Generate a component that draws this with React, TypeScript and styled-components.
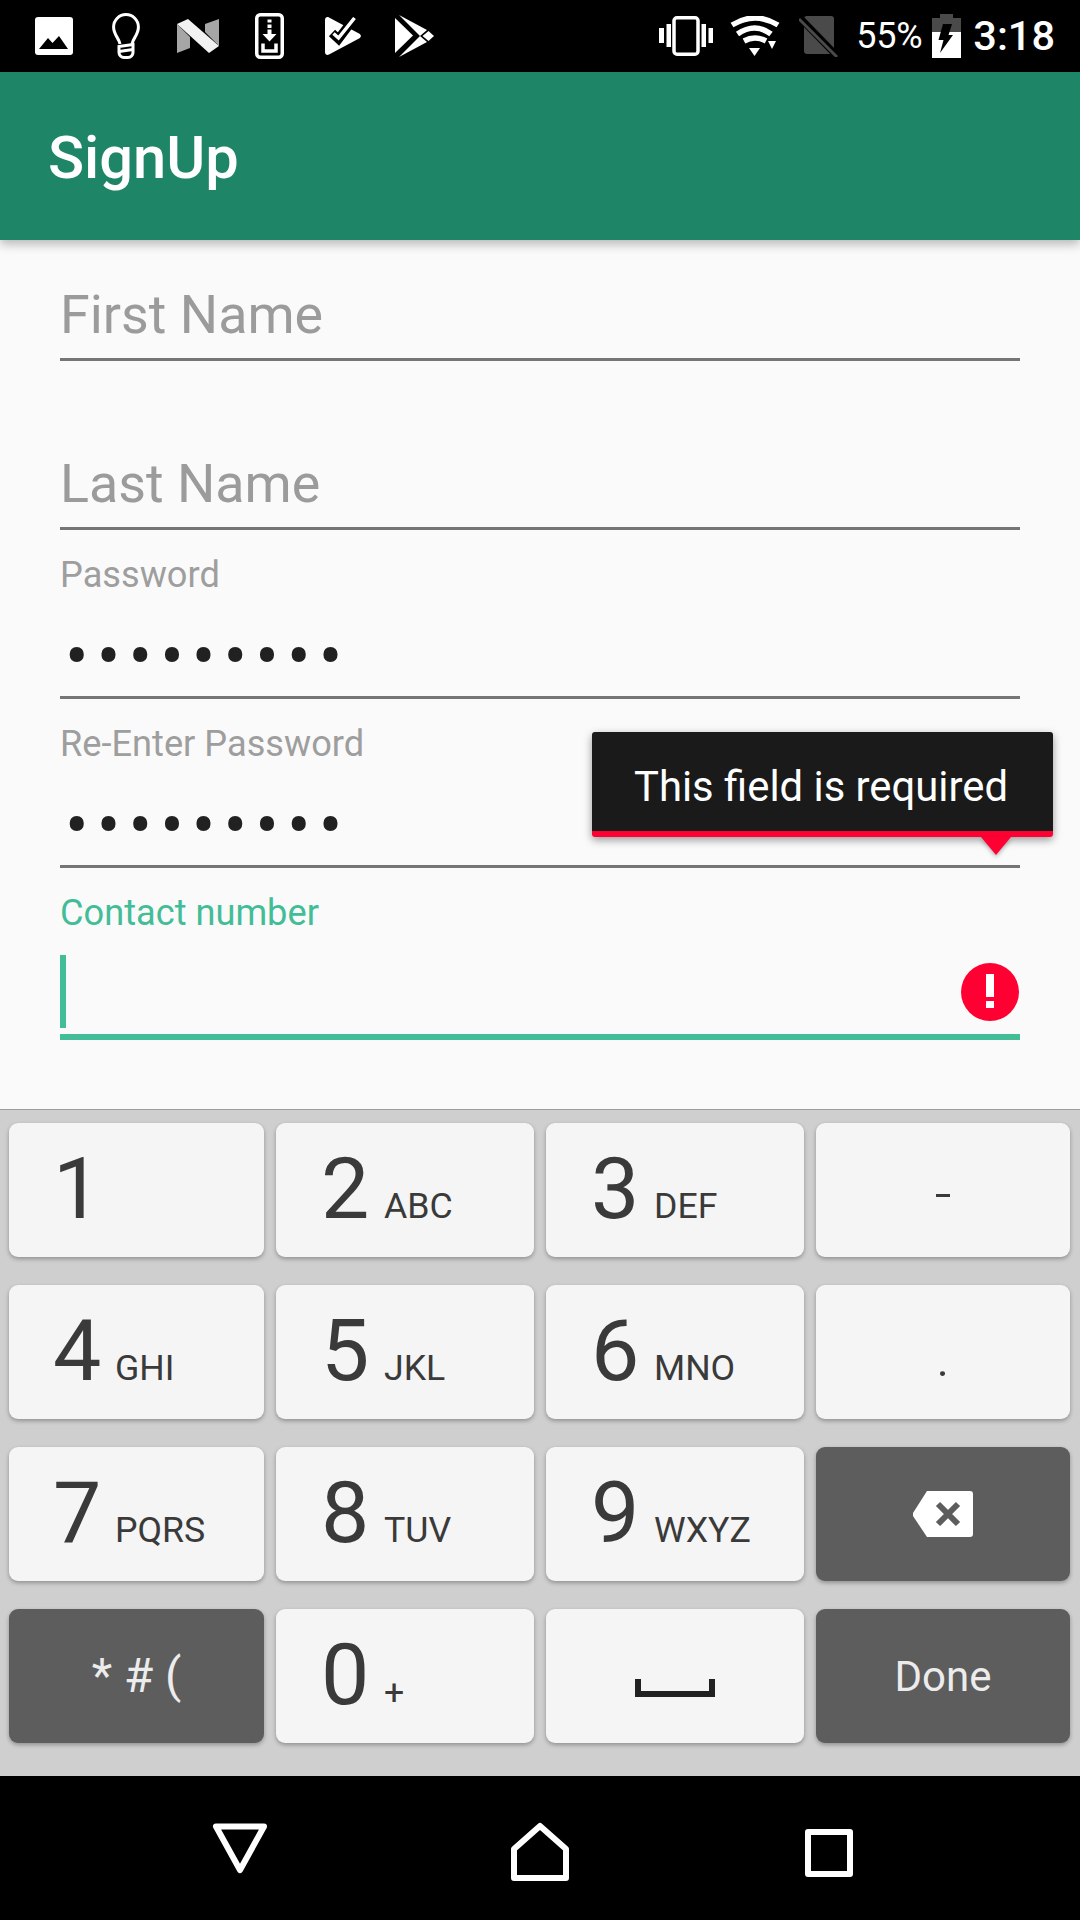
import { FunctionComponent } from "react";
import styled, { createGlobalStyle } from "styled-components";

const GlobalStyle = createGlobalStyle`
  html, body {
    margin: 0;
    padding: 0;
    background: #000;
  }
`;

const Screen = styled.div`
  width: 1080px;
  height: 1920px;
  display: flex;
  flex-direction: column;
  overflow: hidden;
  background: #fafafa;
  font-family: Roboto, "Noto Sans", sans-serif;
`;

const StatusBar = styled.div`
  height: 72px;
  flex-shrink: 0;
  display: flex;
  align-items: center;
  justify-content: space-between;
  padding: 0 25px 0 35px;
  background: #000;
  color: #fff;
`;
const StatusGroup = styled.div`
  display: flex;
  align-items: center;
`;
const StatusIcon = styled.svg<{ $gap?: number }>`
  display: block;
  flex-shrink: 0;
  margin-left: ${(p) => p.$gap ?? 0}px;
`;
const Battery = styled.span`
  margin-left: 18px;
  font-size: 36px;
  line-height: 42px;
  letter-spacing: -0.3px;
`;
const Clock = styled.span`
  margin-left: 12px;
  font-size: 41.5px;
  font-weight: 500;
  line-height: 48px;
`;

const AppBar = styled.header`
  position: relative;
  z-index: 2;
  height: 168px;
  flex-shrink: 0;
  display: flex;
  align-items: center;
  padding: 3px 0 0 48px;
  box-sizing: border-box;
  background: #1f8567;
  box-shadow: 0 4px 10px rgba(0, 0, 0, 0.28);
`;
const Title = styled.h1`
  margin: 0;
  color: #fff;
  font-size: 59.6px;
  font-weight: 500;
  line-height: 66px;
`;

const Form = styled.main`
  position: relative;
  height: 869px;
  flex-shrink: 0;
  padding: 0 60px;
  background: #fafafa;
`;
const Field = styled.div<{ $focused?: boolean; $height: number }>`
  height: ${(p) => p.$height}px;
  box-sizing: border-box;
  display: flex;
  flex-direction: column;
  justify-content: flex-end;
  border-bottom: ${(p) => (p.$focused ? "6px solid #43bd98" : "3px solid #757575")};
`;
const Placeholder = styled.div`
  padding: 0 0 13px 0;
  color: #9b9b9b;
  font-size: 53.8px;
  line-height: 60px;
`;
const FloatingLabel = styled.label<{ $focused?: boolean }>`
  display: block;
  margin-bottom: auto;
  padding-top: 24px;
  color: ${(p) => (p.$focused ? "#43bd98" : "#9e9e9e")};
  font-size: 36.2px;
  line-height: 42px;
`;
const PasswordValue = styled.div`
  padding: 0 0 10px 5px;
  color: #212121;
  font-size: 70px;
  line-height: 60px;
  letter-spacing: 8.1px;
`;
const InputRow = styled.div`
  display: flex;
  align-items: center;
  justify-content: space-between;
  height: 73px;
  margin-bottom: 6px;
  padding-right: 1px;
`;
const Caret = styled.span`
  width: 6px;
  height: 73px;
  background: #43bd98;
`;

const Tooltip = styled.div`
  position: absolute;
  top: 492px;
  right: 27px;
  width: 461px;
  height: 105px;
  box-sizing: border-box;
  display: flex;
  align-items: center;
  justify-content: center;
  padding: 10px 3px 0 0;
  border-bottom: 6px solid #ff0033;
  border-radius: 3px;
  background: #1a1a1a;
  color: #fff;
  font-size: 41.8px;
  box-shadow: 0 3px 8px rgba(0, 0, 0, 0.4);
  &::after {
    content: "";
    position: absolute;
    right: 42px;
    bottom: -24px;
    border-style: solid;
    border-width: 18px 15.5px 0;
    border-color: #ff0033 transparent transparent;
    filter: drop-shadow(0 2px 2px rgba(0, 0, 0, 0.3));
  }
`;

const Digit = styled.span`
  width: 63px;
  font-size: 86px;
  line-height: 132px;
  flex-shrink: 0;
`;
const Keyboard = styled.section`
  height: 667px;
  flex-shrink: 0;
  box-sizing: border-box;
  display: grid;
  grid-template-columns: 255px 258px 258px 254px;
  grid-auto-rows: 134px;
  column-gap: 12px;
  row-gap: 28px;
  padding: 13px 10px 0 9px;
  border-top: 1px solid #9c9c9c;
  background: #cfcfcf;
  & > :nth-child(4n + 1) ${Digit} {
    width: 62px;
    margin-left: -1px;
  }
`;
const Key = styled.div<{ $dark?: boolean; $centered?: boolean }>`
  display: flex;
  align-items: ${(p) => (p.$centered ? "center" : "baseline")};
  justify-content: ${(p) => (p.$centered ? "center" : "flex-start")};
  padding-left: ${(p) => (p.$centered ? 0 : 45)}px;
  border-radius: 9px;
  background: ${(p) => (p.$dark ? "#5d5d5d" : "#f5f5f5")};
  color: ${(p) => (p.$dark ? "#ececec" : "#3a3a3a")};
  box-shadow: 0 2px 4px rgba(0, 0, 0, 0.3);
`;
const Letters = styled.span`
  font-size: 35.7px;
`;
const Symbol = styled.span<{ $shift: number }>`
  font-size: 60px;
  font-weight: 300;
  line-height: 60px;
  transform: translateY(${(p) => p.$shift}px);
`;
const KeyLabel = styled.span<{ $size: number; $lower?: boolean }>`
  padding-top: ${(p) => (p.$lower ? 2 : 0)}px;
  font-size: ${(p) => p.$size}px;
  line-height: 50px;
`;
const SpaceGlyph = styled.svg`
  display: block;
  margin-top: 24px;
`;

const NavBar = styled.nav`
  flex: 1;
  display: flex;
  align-items: center;
  padding: 8px 0 0 208px;
  background: #000;
`;

const ImageIcon = () => (
  <StatusIcon width="38" height="38" viewBox="0 0 38 38">
    <rect width="38" height="38" rx="3" fill="#fff" />
    <path d="M4 32 13 21l4.500 5L24 19l9 13z" fill="#000" />
  </StatusIcon>
);
const BulbIcon = () => (
  <StatusIcon $gap={39} width="28" height="46" viewBox="0 0 28 46" fill="none" stroke="#fff" strokeWidth="3">
    <path d="M8 31C7 25 1.600 22 1.600 14a12.400 12.400 0 0 1 24.800 0C26.400 22 21 25 20 31" />
    <path d="M7 33.500 21 31.500v8a5 5 0 0 1-5 5h-4a5 5 0 0 1-5-5z" />
    <path d="M7 38.500 21 36.500" />
  </StatusIcon>
);
const NougatIcon = () => (
  <StatusIcon $gap={37} width="42" height="34" viewBox="0 0 42 34">
    <path d="M0 5v29l13-5V18z" fill="#a6a6a6" />
    <path d="M28 5 42 0v27L28 13z" fill="#a6a6a6" />
    <path d="M0 5 11 0l31 27-10 7z" fill="#f2f2f2" />
  </StatusIcon>
);
const SideloadIcon = () => (
  <StatusIcon $gap={36} width="29" height="46" viewBox="0 0 29 46">
    <rect x="1.750" y="1.750" width="25.500" height="42.500" rx="3.500" fill="none" stroke="#fff" strokeWidth="3.500" />
    <path d="M12.500 6.500h4v3h-4zM12.500 11.500h4V15h-4zM12.500 16.500h4V21h5l-7 7.500-7-7.500h5z" fill="#fff" />
    <path d="M8 30.500v7.500h13v-7.500" fill="none" stroke="#fff" strokeWidth="3.500" />
  </StatusIcon>
);
const TasksIcon = () => (
  <StatusIcon $gap={41} width="36" height="38" viewBox="0 0 36 38">
    <path d="M0 3C0 .5 2-.5 4 .5l30 16c2.500 1.300 2.500 3.700 0 5l-30 16c-2 1-4 0-4-2.500z" fill="#fff" />
    <path d="M7 16l6.500 6L30 0" fill="none" stroke="#000" strokeWidth="9" />
    <path d="M8.500 16.500l5 4.500L29.500 1" fill="none" stroke="#fff" strokeWidth="3.500" />
  </StatusIcon>
);
const PlayIcon = () => (
  <StatusIcon $gap={34} width="39" height="42" viewBox="0 0 39 42" fill="#fff">
    <path d="M0 3v35l18-17.500z" />
    <path d="M4 0l28 15-7 6z" />
    <path d="M4 42l28-15-7-6z" />
    <path d="M33.500 16l5.500 5-5.500 5-6-5z" />
  </StatusIcon>
);
const VibrateIcon = () => (
  <StatusIcon width="54" height="40" viewBox="0 0 54 40" fill="#fff">
    <path d="M0 12h5v15H0zM7.500 8h4.500v23H7.500zM42.500 8h4.500v23h-4.500zM49.500 12H54v15h-4.500z" />
    <rect x="15" y="1.750" width="24" height="36.500" rx="3" fill="none" stroke="#fff" strokeWidth="3.500" />
  </StatusIcon>
);
const WifiIcon = () => (
  <StatusIcon $gap={17} width="50" height="40" viewBox="0 0 50 40" fill="none" stroke="#fff" strokeWidth="5.500">
    <path d="M2 9Q25-5 48 9" />
    <path d="M7.500 18Q25 6 41 18" />
    <path d="M14 25Q25 19 36 25" />
    <path d="M19 32h11l-5.500 8zM38 25h8l-4 8z" fill="#fff" stroke="none" />
  </StatusIcon>
);
const NoSimIcon = () => (
  <StatusIcon $gap={19} width="39" height="41" viewBox="0 0 39 41">
    <path d="M8 0h24a3 3 0 0 1 3 3v32a3 3 0 0 1-3 3H8a3 3 0 0 1-3-3V3a3 3 0 0 1 3-3z" fill="#4a4a4a" />
    <path d="M0 1l39 40" stroke="#000" strokeWidth="7" />
    <path d="M0 3l38 38" stroke="#4a4a4a" strokeWidth="3" />
  </StatusIcon>
);
const BatteryIcon = () => (
  <StatusIcon $gap={10} width="29" height="44" viewBox="0 0 29 44">
    <path d="M8 0h13v4h8v14H0V4h8z" fill="#4a4a4a" />
    <rect y="18" width="29" height="26" fill="#fff" />
    <path d="M11 10h9l-3.500 11h4.500L8 39l3.500-13H6.500z" fill="#000" />
  </StatusIcon>
);

const BackspaceIcon = () => (
  <svg width="60" height="46" viewBox="0 0 60 46">
    <path d="M14 0h43a3 3 0 0 1 3 3v40a3 3 0 0 1-3 3H14L0 25v-3z" fill="#fff" />
    <path d="M25 13l20 20M45 13 25 33" stroke="#5d5d5d" strokeWidth="6" />
  </svg>
);
const SpaceIcon = () => (
  <SpaceGlyph width="80" height="18" viewBox="0 0 80 18">
    <path d="M0 0h6v12h68V0h6v18H0z" fill="#212121" />
  </SpaceGlyph>
);
const ErrorIcon = () => (
  <svg width="58" height="58" viewBox="0 0 58 58">
    <circle cx="29" cy="29" r="29" fill="#ff0033" />
    <path d="M25 11h8v23h-8zM25 38h8v7h-8z" fill="#fff" />
  </svg>
);

const navStroke = { fill: "none", stroke: "#fff", strokeWidth: 6, strokeLinejoin: "round" } as const;
const BackIcon = () => (
  <StatusIcon width="64" height="64" viewBox="0 0 64 64">
    <path d="M8 6.500h48L32 50z" {...navStroke} />
  </StatusIcon>
);
const HomeIcon = () => (
  <StatusIcon $gap={236} width="64" height="64" viewBox="0 0 64 64">
    <path d="M32 6 58 29v29H6V29z" {...navStroke} />
  </StatusIcon>
);
const RecentsIcon = () => (
  <StatusIcon $gap={225} width="64" height="64" viewBox="0 0 64 64">
    <rect x="11" y="12" width="42" height="42" {...navStroke} />
  </StatusIcon>
);

const digitKeys: { digit: string; letters?: string }[][] = [
  [{ digit: "1" }, { digit: "2", letters: "ABC" }, { digit: "3", letters: "DEF" }],
  [{ digit: "4", letters: "GHI" }, { digit: "5", letters: "JKL" }, { digit: "6", letters: "MNO" }],
  [{ digit: "7", letters: "PQRS" }, { digit: "8", letters: "TUV" }, { digit: "9", letters: "WXYZ" }],
];

const App: FunctionComponent = () => {
  return (
    <Screen>
      <GlobalStyle />
      <StatusBar>
        <StatusGroup>
          <ImageIcon />
          <BulbIcon />
          <NougatIcon />
          <SideloadIcon />
          <TasksIcon />
          <PlayIcon />
        </StatusGroup>
        <StatusGroup>
          <VibrateIcon />
          <WifiIcon />
          <NoSimIcon />
          <Battery>55%</Battery>
          <BatteryIcon />
          <Clock>3:18</Clock>
        </StatusGroup>
      </StatusBar>
      <AppBar>
        <Title>SignUp</Title>
      </AppBar>
      <Form>
        <Field $height={121}>
          <Placeholder>First Name</Placeholder>
        </Field>
        <Field $height={169}>
          <Placeholder>Last Name</Placeholder>
        </Field>
        <Field $height={169}>
          <FloatingLabel>Password</FloatingLabel>
          <PasswordValue>•••••••••</PasswordValue>
        </Field>
        <Field $height={169}>
          <FloatingLabel>Re-Enter Password</FloatingLabel>
          <PasswordValue>•••••••••</PasswordValue>
        </Field>
        <Field $height={172} $focused>
          <FloatingLabel $focused>Contact number</FloatingLabel>
          <InputRow>
            <Caret />
            <ErrorIcon />
          </InputRow>
        </Field>
        <Tooltip>This field is required</Tooltip>
      </Form>
      <Keyboard>
        {digitKeys.map((row, i) => [
          ...row.map((k) => (
            <Key key={k.digit}>
              <Digit>{k.digit}</Digit>
              {k.letters && <Letters>{k.letters}</Letters>}
            </Key>
          )),
          i === 0 ? (
            <Key key="dash" $centered>
              <Symbol $shift={4}>-</Symbol>
            </Key>
          ) : i === 1 ? (
            <Key key="dot" $centered>
              <Symbol $shift={4}>.</Symbol>
            </Key>
          ) : (
            <Key key="backspace" $centered $dark>
              <BackspaceIcon />
            </Key>
          ),
        ])}
        <Key $centered $dark>
          <KeyLabel $size={47.5}>* # (</KeyLabel>
        </Key>
        <Key>
          <Digit>0</Digit>
          <Letters>+</Letters>
        </Key>
        <Key $centered>
          <SpaceIcon />
        </Key>
        <Key $centered $dark>
          <KeyLabel $size={42} $lower>
            Done
          </KeyLabel>
        </Key>
      </Keyboard>
      <NavBar>
        <BackIcon />
        <HomeIcon />
        <RecentsIcon />
      </NavBar>
    </Screen>
  );
};

export default App;
